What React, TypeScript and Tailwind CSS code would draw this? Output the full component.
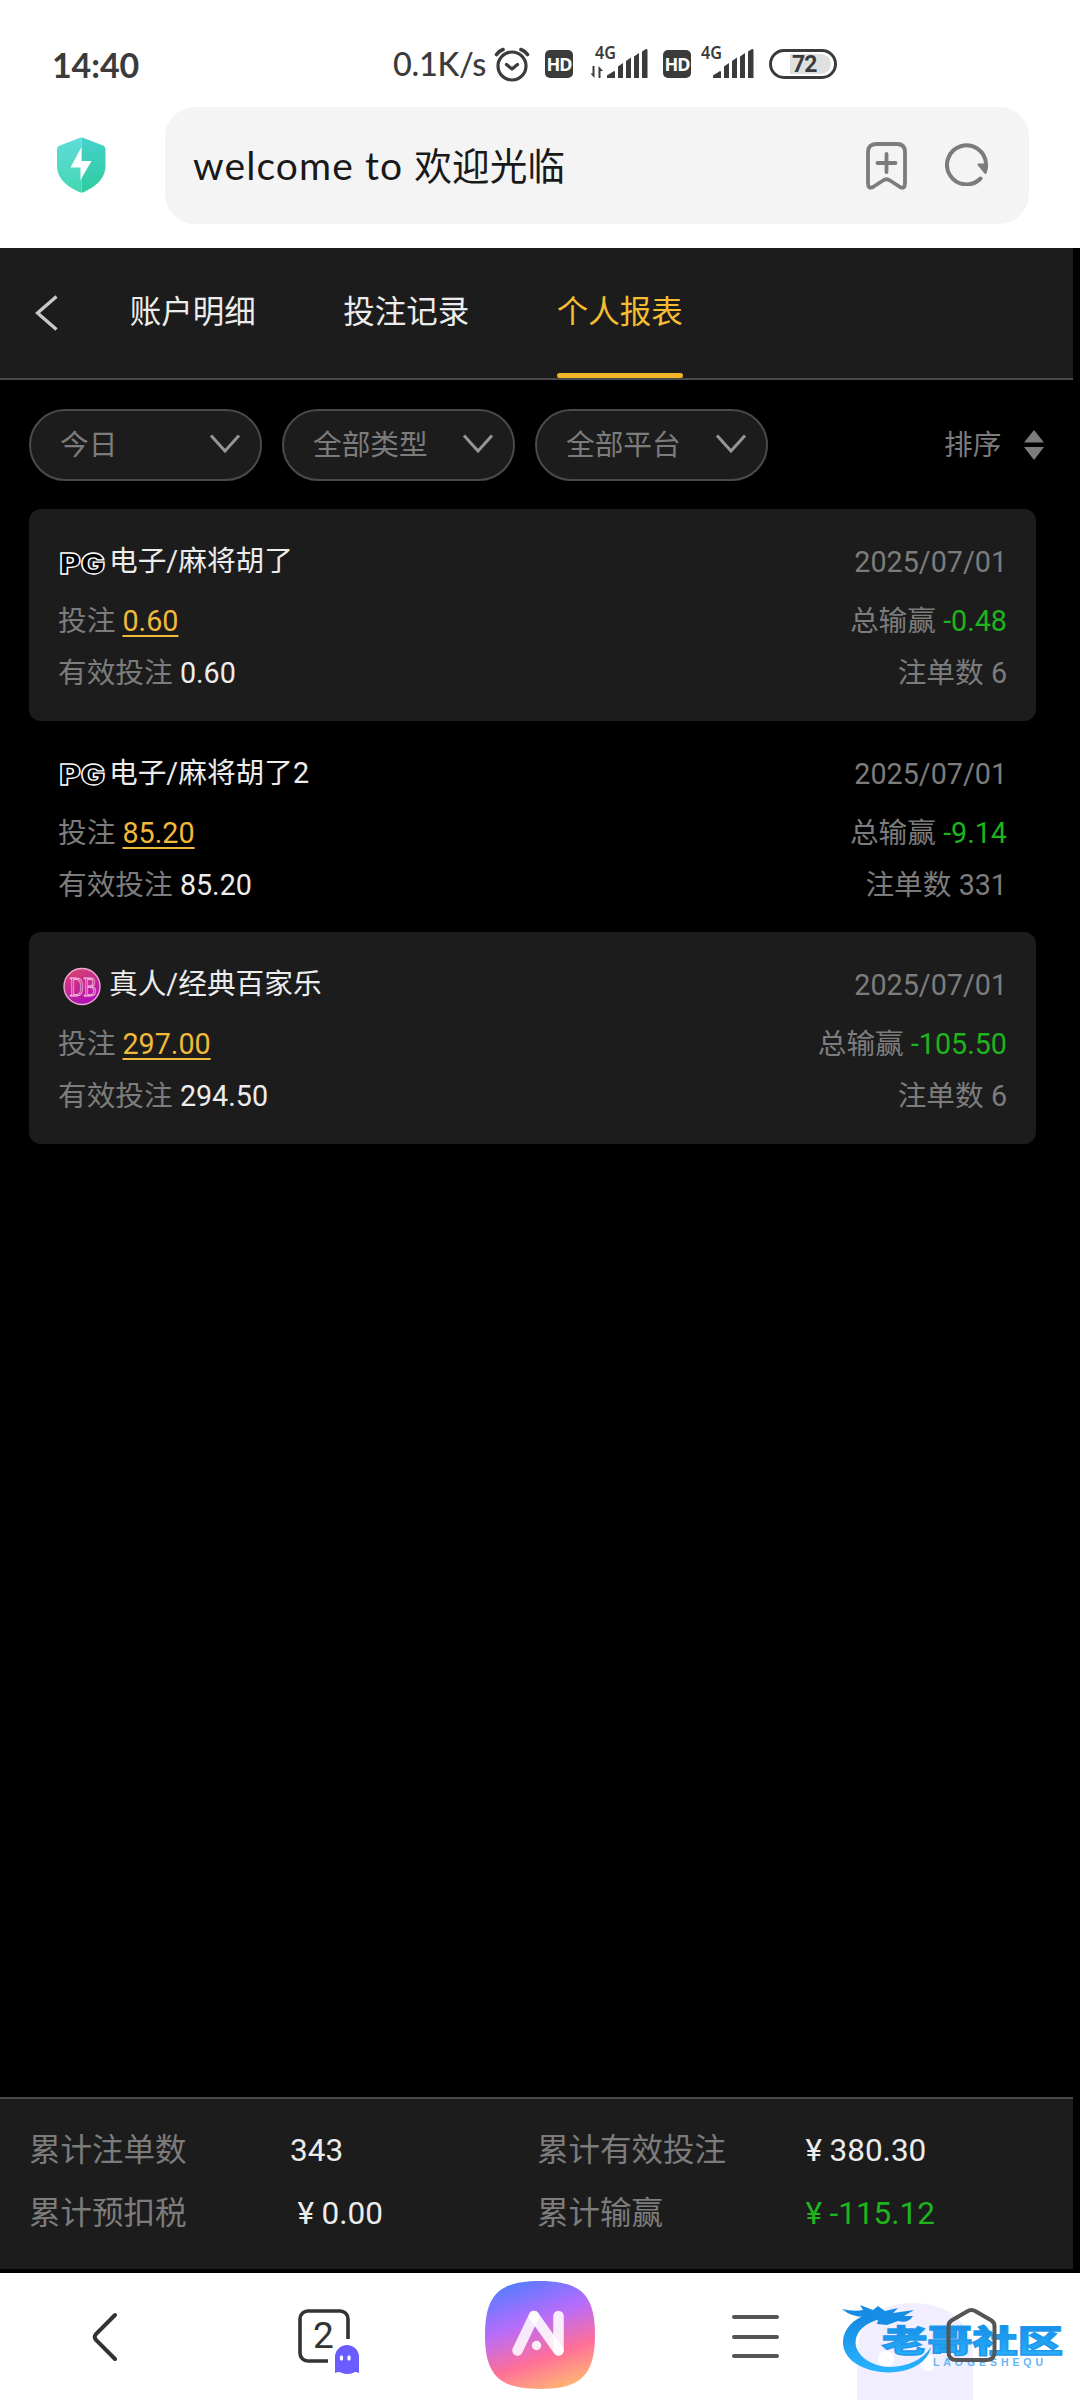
import React, { useState } from 'react';
import clsx from 'clsx';

interface BetRecord {
  id: number;
  platform: 'PG' | 'DB';
  title: string;
  date: string;
  bet: string;
  validBet: string;
  profit: string;
  count: number;
}

const TABS = ['账户明细', '投注记录', '个人报表'];
const FILTERS = ['今日', '全部类型', '全部平台'];

const RECORDS: BetRecord[] = [
  { id: 1, platform: 'PG', title: '电子/麻将胡了', date: '2025/07/01', bet: '0.60', validBet: '0.60', profit: '-0.48', count: 6 },
  { id: 2, platform: 'PG', title: '电子/麻将胡了2', date: '2025/07/01', bet: '85.20', validBet: '85.20', profit: '-9.14', count: 331 },
  { id: 3, platform: 'DB', title: '真人/经典百家乐', date: '2025/07/01', bet: '297.00', validBet: '294.50', profit: '-105.50', count: 6 },
];

const HdBadge = ({ className }: { className: string }) => (
  <div className={clsx('flex h-[28px] w-[28px] items-center justify-center rounded-[5px] bg-[#3b3b3b]', className)}>
    <span className="font-['Noto_Sans'] text-[18px] leading-none font-bold tracking-[-1px] text-white">HD</span>
  </div>
);

const Signal = ({ arrows, className }: { arrows?: boolean; className: string }) => (
  <svg className={className} width="58" height="38" viewBox="0 -4 58 38" fill="#3b3b3b">
    <text x="5" y="15" fontSize="17" fontWeight="600" textLength="21" lengthAdjust="spacingAndGlyphs" className="font-['Noto_Sans']">4G</text>
    {arrows && (
      <path d="M2.500 29.500V22h2v12L0.500 29.500zM8.500 34V22l4.500 5h-2.500v7z" />
    )}
    <path d="M17 34v-2.500l7-4.500q1 0 1 1v6zM28 34V22.500l5-3.500v15zM36 34V17l5-3.500V34zM44 34V12.500l5-3.500v25zM52 34V7.500l4-2.500q1.500-.5 1.500 1.500V34z" />
  </svg>
);

function StatusBar() {
  return (
    <div className="flex h-[107px] items-center pt-[21px] pl-[52px] text-[#3b3b3b]">
      <span className="w-[341px] font-['Lato'] text-[34px] font-bold tracking-[-0.1px]">14:40</span>
      <span className="w-[101px] font-['Lato'] text-[32.500px] font-medium tracking-[-0.3px] whitespace-nowrap">0.1K/s</span>
      <svg width="36" height="36" viewBox="0 0 36 36" fill="none" stroke="#3b3b3b" strokeLinecap="round">
        <circle cx="18" cy="20" r="14" strokeWidth="3.200" />
        <path d="M12.500 18.500l5.500 4.500 5.500-4.500" strokeWidth="3.200" strokeLinejoin="round" />
        <path d="M2.500 8.500Q5 5 9 3.500M33.500 8.500Q31 5 27 3.500" strokeWidth="3.600" />
      </svg>
      <HdBadge className="ml-[15px]" />
      <Signal arrows className="mb-[10px] ml-[17px]" />
      <HdBadge className="ml-[15px]" />
      <Signal className="mb-[10px] ml-[5px]" />
      <div className="ml-[15px] flex h-[30px] w-[68px] items-center justify-center rounded-full border-[3px] border-[#3b3b3b] bg-white p-[3px]">
        <div className="ml-[15px] flex h-[20px] w-[41px] items-center rounded-r-full bg-[#e0e0e0] pl-[2px]">
          <span className="font-['Roboto'] text-[23px] leading-none font-bold tracking-[-1px]">72</span>
        </div>
      </div>
    </div>
  );
}

function AddressBar() {
  return (
    <div className="flex h-[141px] items-start">
      <svg className="mt-[30px] ml-[57px]" width="49" height="57" viewBox="0 0 49 57">
        <defs>
          <linearGradient id="shieldLeft" x1="0" y1="0" x2="0" y2="1">
            <stop offset="0" stopColor="#5fdcd8" />
            <stop offset="1" stopColor="#45d6b4" />
          </linearGradient>
          <linearGradient id="shieldRight" x1="0" y1="0" x2="0" y2="1">
            <stop offset="0" stopColor="#48d0cc" />
            <stop offset="1" stopColor="#2dcd9f" />
          </linearGradient>
        </defs>
        <path d="M24.500 0.500Q23 0.500 21 1.500L3 8.500Q0 9.500 0 12V29Q0 45 22 55Q23.500 55.500 24.500 55.500z" fill="url(#shieldLeft)" />
        <path d="M24.500 0.500Q26 0.500 28 1.500L46 8.500Q48.500 9.500 48.500 12V29Q48.500 45 27 55Q25.500 55.500 24.500 55.500z" fill="url(#shieldRight)" />
        <path d="M24.500 10L13.500 30.500h10V43L34.500 24h-10z" fill="#fff" />
      </svg>
      <div className="ml-[59px] flex h-[117px] w-[864px] items-center rounded-[30px] bg-[#f4f4f4] pr-[40px] pl-[28px]">
        <span className="flex-1 font-['Lato','Noto_Sans_CJK_SC',sans-serif] text-[37.700px] whitespace-pre text-[#191919]">
          <span className="text-[39px] tracking-[1.100px]">welcome to </span>欢迎光临
        </span>
        <svg width="41" height="48" viewBox="0 0 41 48" fill="none" stroke="#7c7c7c" strokeWidth="3.800" strokeLinecap="round" strokeLinejoin="round">
          <path d="M10 2H31Q39 2 39 10V41Q39 47.500 34 45L24 38.500Q20.500 36 17 38.500L7 45Q2 47.500 2 41V10Q2 2 10 2z" />
          <path d="M20.500 12v18M11.500 21h18" />
        </svg>
        <svg className="mb-[3px] ml-[38px]" width="44" height="44" viewBox="0 0 44 44" fill="none" stroke="#7c7c7c" strokeWidth="4" strokeLinecap="round">
          <path d="M35.500 36.500A19.500 19.500 0 1 1 41 22" />
          <path d="M33.500 22.500H42V26L40.500 31Z" fill="#7c7c7c" strokeWidth="2" strokeLinejoin="round" />
        </svg>
      </div>
    </div>
  );
}

function TabHeader() {
  const [active, setActive] = useState('个人报表');

  return (
    <div className="flex h-[132px] border-b-2 border-[#4a4a4a] bg-[#1c1c1c]">
      <svg className="mt-[47px] ml-[35px]" width="24" height="36" viewBox="0 0 24 36" fill="none" stroke="#c8c8c8" strokeWidth="3.400">
        <path d="M21.500 1.500L2.500 18L21.500 34.500" />
      </svg>
      <div className="ml-[70.500px] flex gap-[87px]">
        {TABS.map(tab => (
          <button
            key={tab}
            onClick={() => setActive(tab)}
            className={clsx('relative flex h-[130px] w-[126.500px] justify-center pt-[41px] text-[31.500px] leading-[47px] whitespace-nowrap', tab === active ? 'text-[#f5bd30]' : 'text-[#ececec]')}
          >
            {tab}
            {tab === active && <span className="absolute bottom-0 left-0 h-[5px] w-full rounded-full bg-[#f0b429]" />}
          </button>
        ))}
      </div>
    </div>
  );
}

function FilterBar() {
  return (
    <div className="flex h-[129px] items-center pl-[29px] text-[28.700px] text-[#7c7c7c]">
      <div className="flex gap-[20px]">
        {FILTERS.map(label => (
          <div key={label} className="flex h-[72px] w-[233px] items-center justify-between rounded-full border-2 border-[#4a4a4a] bg-[#1c1c1c] pr-[19px] pl-[29px]">
            <span className="pt-[3px]">{label}</span>
            <svg className="mb-[2px]" width="32" height="20" viewBox="0 0 32 20" fill="none" stroke="#959595" strokeWidth="3">
              <path d="M2 1.500L16 17L30 1.500" />
            </svg>
          </div>
        ))}
      </div>
      <span className="ml-[176px] pt-[3px]">排序</span>
      <svg className="ml-[23px]" width="20" height="30" viewBox="0 0 20 30" fill="#7c7c7c">
        <path d="M10 0L20 12.500H0zM10 30L20 17H0z" />
      </svg>
    </div>
  );
}

const PlatformIcon = ({ platform }: { platform: 'PG' | 'DB' }) => {
  if (platform === 'PG') {
    return (
      <svg width="51" height="44" viewBox="0 0 51 44">
        <text x="1.500" y="34" textLength="45.500" lengthAdjust="spacingAndGlyphs" fontSize="28" fontWeight="900" fill="#000" stroke="#fff" strokeWidth="1.300" className="font-['Inter']">PG</text>
      </svg>
    );
  }
  return (
    <svg width="51" height="44" viewBox="0 0 51 44">
      <defs>
        <linearGradient id="dbFill" x1="0.2" y1="0" x2="0.6" y2="1">
          <stop offset="0" stopColor="#d9446a" />
          <stop offset="1" stopColor="#b010b8" />
        </linearGradient>
      </defs>
      <circle cx="24" cy="23.500" r="18" fill="url(#dbFill)" stroke="#eba6d6" strokeWidth="1.400" />
      <text x="11.500" y="33" textLength="27" fontSize="27" fill="#c32f93" stroke="#f3bfe2" strokeWidth="0.900" className="font-['Liberation_Serif']" lengthAdjust="spacingAndGlyphs">DB</text>
    </svg>
  );
};

function RecordCard({ record, shaded }: { record: BetRecord; shaded: boolean }) {
  return (
    <div className={clsx('h-[211.600px] w-[1007px] rounded-[12px] px-[29px] pt-[22.600px] text-[28.700px] text-[#7c7c7c]', shaded && 'bg-[#1c1c1c]')}>
      <div className="flex h-[60px] items-center justify-between">
        <div className="flex items-center text-[#ececec]">
          <PlatformIcon platform={record.platform} />
          <span>{record.title}</span>
        </div>
        <span className="pt-[2px]">{record.date}</span>
      </div>
      <div className="flex h-[60px] items-center justify-between">
        <span>投注 <span className="text-[#f0b93a] underline decoration-2 underline-offset-[4px]">{record.bet}</span></span>
        <span>总输赢 <span className="text-[#1eb41e]">{record.profit}</span></span>
      </div>
      <div className="flex h-[44px] items-center justify-between">
        <span>有效投注 <span className="text-[#ececec]">{record.validBet}</span></span>
        <span>注单数 {record.count}</span>
      </div>
    </div>
  );
}

const Amount = ({ value, className }: { value: string; className: string }) => (
  <span className={className}>
    <span className="inline-block w-[31.500px] text-center">¥</span>{value}
  </span>
);

function Summary() {
  return (
    <div className="grid h-[172px] grid-cols-[261px_247px_261px_1fr] grid-rows-[63px_63px] border-t-2 border-[#4a4a4a] bg-[#1c1c1c] pt-[20px] pl-[29px] text-[31.500px] leading-[63px] text-[#7c7c7c]">
      <span>累计注单数</span>
      <span className="text-[#ececec]">343</span>
      <span>累计有效投注</span>
      <Amount value="380.30" className="text-[#ececec]" />
      <span>累计预扣税</span>
      <Amount value="0.00" className="text-[#ececec]" />
      <span>累计输赢</span>
      <Amount value="-115.12" className="text-[#1eb41e]" />
    </div>
  );
}

const AiButton = () => (
  <svg className="ml-[125px]" width="110" height="108" viewBox="0 0 110 108">
    <defs>
      <linearGradient id="aiFill" x1="0.32" y1="0" x2="0.68" y2="1">
        <stop offset="0" stopColor="#5a7bff" />
        <stop offset="0.36" stopColor="#b76cfb" />
        <stop offset="0.7" stopColor="#ff6f98" />
        <stop offset="1" stopColor="#ffb574" />
      </linearGradient>
    </defs>
    <path d="M55 0C96 0 110 14 110 54S96 108 55 108S0 94 0 54S14 0 55 0z" fill="url(#aiFill)" />
    <g fill="none" stroke="#fff" strokeWidth="10.500" strokeLinecap="round" strokeLinejoin="round">
      <path d="M32.500 69.500L49 35" strokeOpacity="0.85" />
      <path d="M73.500 69V35" strokeOpacity="0.88" />
      <path d="M49 35L73.500 69.500" strokeOpacity="0.88" />
    </g>
    <circle cx="51.500" cy="64.500" r="4.700" fill="#fff" fillOpacity="0.88" />
  </svg>
);

// community logo laid over the right end of the toolbar
const Watermark = () => (
  <svg className="absolute top-[22px] right-0" width="260" height="105" viewBox="0 0 260 105">
    <defs>
      <linearGradient id="wmBlue" x1="0" y1="0" x2="0" y2="1">
        <stop offset="0" stopColor="#1286e0" />
        <stop offset="1" stopColor="#2ab4ff" />
      </linearGradient>
    </defs>
    <path d="M37 105V57Q41 9 92 8Q147 9 153 57V105z" fill="#f0eeff" />
    <circle cx="66" cy="64" r="8" fill="#fff" />
    <circle cx="108" cy="68" r="8" fill="#fff" />
    <path d="M56 17C18 24 13 58 40 71C66 84 106 77 111 52C100 70 71 77 52 68C28 57 30 32 60 24z" fill="url(#wmBlue)" />
    <path d="M22 14Q34 17 43 15L40 10L53 15L58 11L65 16L78 13L73 18L94 15L84 21L93 21Q88 29 78 26L67 30L57 29L58 25L45 22Q31 22 22 14z" fill="#178ce4" />
    <text x="62" y="57" textLength="181" lengthAdjust="spacingAndGlyphs" fontSize="31" fontWeight="900" fill="url(#wmBlue)" stroke="#1e98ec" strokeWidth="1.300" className="font-['Noto_Sans_CJK_SC']">老哥社区</text>
    <text x="113" y="71" textLength="110" fontSize="10.500" fontWeight="700" fill="#6ab6f2" className="font-['Liberation_Sans']">LAOGESHEQU</text>
    <path d="M128.500 31Q128.500 27.500 131.500 25.500L147 16.500Q151.500 13.500 156 16.500L171.500 25.500Q174.500 27.500 174.500 31V57Q174.500 65 166 65H137Q128.500 65 128.500 57z" fill="none" stroke="#555" strokeWidth="4" />
  </svg>
);

function BrowserToolbar() {
  return (
    <div className="relative flex h-[127px] items-start overflow-hidden bg-white pt-[8px]">
      <svg className="mt-[31px] ml-[91px]" width="28" height="50" viewBox="0 0 28 50" fill="none" stroke="#333" strokeWidth="4" strokeLinecap="round">
        <path d="M24 3L5 22Q2.500 25 5 28L24 47" />
      </svg>
      <svg className="mt-[27px] ml-[178px]" width="63" height="67" viewBox="0 0 63 67">
        <rect x="3" y="3" width="48" height="50" rx="8" fill="none" stroke="#333" strokeWidth="3.600" />
        <path d="M31 70V48Q33 31 50 31H63V70z" fill="#fff" />
        <text x="26.500" y="40" textAnchor="middle" fontSize="37" fill="#333" className="font-['Roboto']">2</text>
        <path d="M38 65V49a12 12 0 0 1 24 0V65Q58 63 56 65Q50 67 45 65Q42 63 38 65z" fill="#6a5cff" />
        <ellipse cx="44.500" cy="50" rx="1.700" ry="2.800" fill="#fff" />
        <ellipse cx="52" cy="50" rx="1.700" ry="2.800" fill="#fff" />
      </svg>
      <AiButton />
      <div className="mt-[34px] ml-[137px] flex w-[47px] flex-col gap-[15.500px]">
        <span className="h-[4px] rounded-full bg-[#555]" />
        <span className="h-[4px] rounded-full bg-[#555]" />
        <span className="h-[4px] rounded-full bg-[#555]" />
      </div>
      <Watermark />
    </div>
  );
}

function App() {
  return (
    <div className="flex h-[2400px] w-[1080px] flex-col bg-white font-['Roboto','Noto_Sans_CJK_SC',sans-serif]">
      <StatusBar />
      <AddressBar />
      <div className="flex h-[2025px] flex-col bg-black pr-[7px] pb-[4px]">
        <TabHeader />
        <FilterBar />
        <div className="flex-1 pl-[29px]">
          {RECORDS.map((record, index) => (
            <RecordCard key={record.id} record={record} shaded={index % 2 === 0} />
          ))}
        </div>
        <Summary />
      </div>
      <BrowserToolbar />
    </div>
  );
}

export default App;
